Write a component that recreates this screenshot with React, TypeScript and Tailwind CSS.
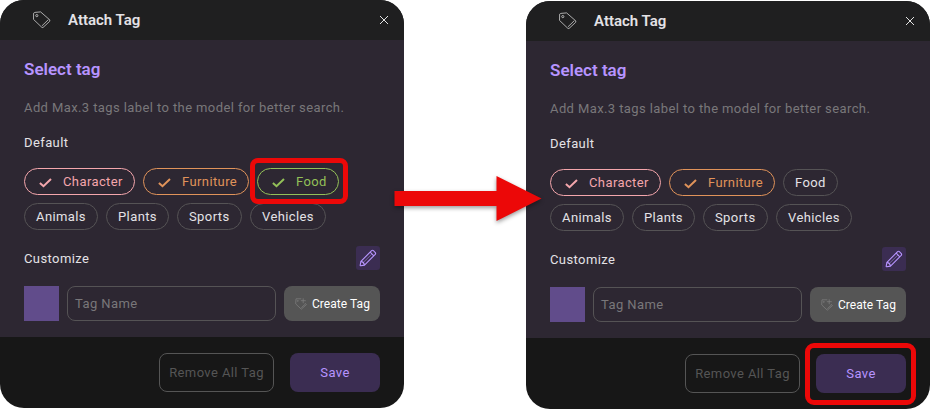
import React from 'react';

const TagIcon = () => (
  <svg className="h-[18px] w-[19px] shrink-0" viewBox="0 0 19 18" fill="none" stroke="#c4c4c4" strokeWidth="0.85" strokeLinejoin="round">
    <path d="M1.6 2.2 L2.9 1.4 L8.6 .9 L17.9 9 L17.6 10.4 L10.9 16.6 L9.7 16.2 L1.5 8.4 Z" />
    <path d="M9.9 14.9 L16.4 8.6" />
    <circle cx="4.8" cy="4.6" r="1.1" />
  </svg>
);

const CheckIcon = () => (
  <svg className="mt-[2px] h-[10px] w-[13px] shrink-0" viewBox="0 0 13 10" fill="none" stroke="currentColor" strokeWidth="2">
    <path d="M.9 4.9 L4.5 8.2 L12 1" />
  </svg>
);

const PencilIcon = () => (
  <svg className="h-[18px] w-[18px]" viewBox="0 0 18 18" fill="none" stroke="#b794ff" strokeWidth="1.1" strokeLinejoin="round">
    <path d="M1.9 12.4 L12.6 1.7 Q13.5 .9 14.4 1.7 L16.3 3.6 Q17 4.5 16.2 5.4 L5.5 16.1 L1.8 16.8 Q1.1 16.8 1.2 16.1 Z" />
    <path d="M1.9 12.4 Q4.8 12.8 5.5 16.1 M11.2 3.1 L14.8 6.8" />
    <path d="M4.1 13.6 L13 4.9" strokeWidth="0.5" />
  </svg>
);

const TagPlusIcon = () => (
  <svg className="h-[12px] w-[12px] shrink-0" viewBox="0 0 12 12" fill="none" stroke="#7c7c7c" strokeWidth="0.8">
    <path d="M6.3 .8 L1 .8 L.7 5.9 L6.3 11.2 L11.4 6.6 L10 5.2 M6.3 9.8 L10.6 5.8" />
    <path d="M8.2 .3 V5.2 M5.8 2.7 H10.8" />
    <circle cx="2.8" cy="2.9" r=".5" />
  </svg>
);

function Chip({ label, size, tone = 'border-[#555355] text-[#e4e2e6]', checked = false }: {
  label: string; size: string; tone?: string; checked?: boolean;
}) {
  return (
    <div className={`flex h-[27px] shrink-0 items-center rounded-full border ${checked ? 'gap-[11px] pl-[14px]' : 'pl-[11px]'} ${size} ${tone}`}>
      {checked && <CheckIcon />}
      <span className="whitespace-nowrap">{label}</span>
    </div>
  );
}

function Dialog({ foodSelected = false, saveMarked = false }: { foodSelected?: boolean; saveMarked?: boolean }) {
  return (
    <section className="h-[408px] w-[404px] shrink-0 overflow-hidden rounded-[24px] bg-[#171717] text-[13px] leading-[16px] tracking-[0.4px] text-[#e4e2e6]">
      <header className="flex h-10 items-center bg-[#1f1f20] pr-[15px] pl-8">
        <TagIcon />
        <h1 className="ml-[17px] flex-1 text-[15px] font-semibold tracking-normal">Attach Tag</h1>
        <svg className="h-[10px] w-[10px]" viewBox="0 0 10 10" stroke="#e2e2e2" strokeWidth="1">
          <path d="M1 1 L9 9 M9 1 L1 9" />
        </svg>
      </header>
      <div className="h-[297px] bg-[#2d2732] px-6 pt-[19px]">
        <h2 className="h-5 text-[17px] leading-5 font-semibold tracking-normal text-[#b794ff]">Select tag</h2>
        <p className="mt-[21px] text-[#79777a]">Add Max.3 tags label to the model for better search.</p>
        <h3 className="mt-[19px]">Default</h3>
        <div className="mt-[17px] flex gap-2">
          <Chip label="Character" size="w-[111px]" tone="border-[#f4a6ac] text-[#f4a6ac]" checked />
          <Chip label="Furniture" size="w-[106px]" tone="border-[#e0935a] text-[#e0935a]" checked />
          {foodSelected ? (
            <div className="relative">
              <Chip label="Food" size="w-[82px]" tone="border-[#93c058] text-[#93c058]" checked />
              <div className="absolute -top-[10px] -left-[7px] z-10 h-[46px] w-[98px] rounded-[8px] border-[5px] border-[#ec0808]" />
            </div>
          ) : (
            <Chip label="Food" size="w-[55px]" />
          )}
        </div>
        <div className="mt-2 flex gap-2">
          <Chip label="Animals" size="w-[74px]" />
          <Chip label="Plants" size="w-[63px]" />
          <Chip label="Sports" size="w-[65px]" />
          <Chip label="Vehicles" size="w-[76px]" />
        </div>
        <div className="mt-4 flex h-6 items-center justify-between">
          <h3 className="pt-[2px]">Customize</h3>
          <button className="flex h-6 w-6 items-center justify-center rounded-[3px] bg-[#3b2d52]"><PencilIcon /></button>
        </div>
        <div className="mt-4 flex h-[35px] gap-2">
          <div className="w-[35px] bg-[#614c8b]" />
          <div className="flex w-[209px] items-center rounded-[8px] border border-[#555355] pl-[7px] text-[#79777a]">Tag Name</div>
          <button className="flex w-24 items-center gap-[5px] rounded-[8px] bg-[#555] pl-[11px] text-[12px] tracking-[0.05px] whitespace-nowrap text-white">
            <TagPlusIcon />
            Create Tag
          </button>
        </div>
      </div>
      <footer className="flex justify-end gap-4 px-6 pt-4">
        <button className="h-[39px] w-[115px] rounded-[8px] border border-[#555] whitespace-nowrap text-[#555]">Remove All Tag</button>
        <div className="relative">
          <button className="h-[39px] w-[90px] rounded-[8px] bg-[#3b2d52] text-[#b794ff]">Save</button>
          {saveMarked && (
            <div className="absolute -top-[11px] -left-[11px] h-[62px] w-[111px] rounded-[9px] border-[5px] border-[#ec0808]" />
          )}
        </div>
      </footer>
    </section>
  );
}

export default function App() {
  return (
    <main className="relative flex h-[409px] w-[930px] justify-between overflow-hidden bg-white font-['Roboto',sans-serif]">
      <Dialog foodSelected />
      <div className="pt-px">
        <Dialog saveMarked />
      </div>
      <svg className="absolute top-[170px] left-[388px] h-[60px] w-[160px] drop-shadow-[0_2px_2px_rgba(0,0,0,0.4)]" viewBox="0 0 160 60">
        <path d="M6.500 21 H108.500 V6 L153.500 28.500 L108.500 51 V36 H6.500 Z" fill="#ec0808" />
      </svg>
    </main>
  );
}
